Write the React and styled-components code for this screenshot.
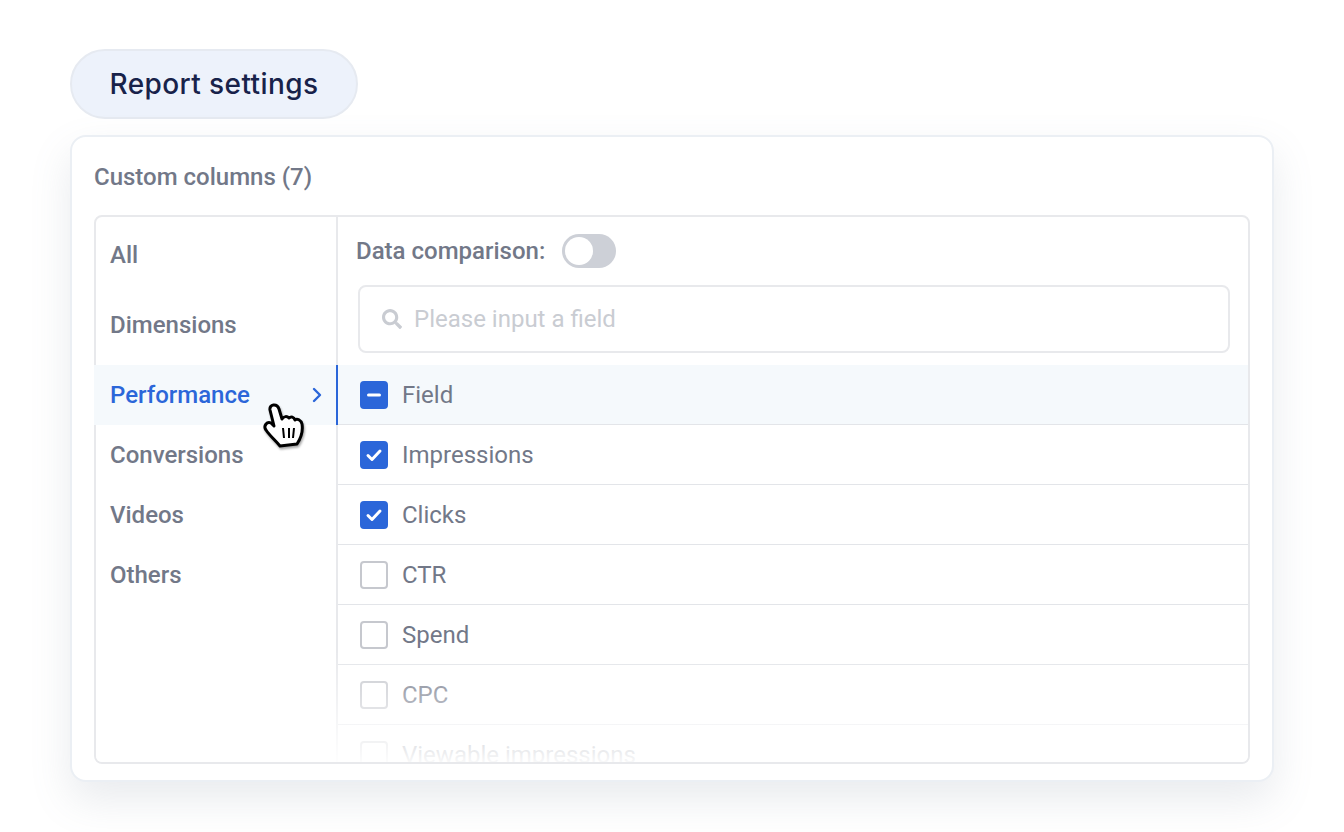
import React from 'react'
import styled, { createGlobalStyle } from 'styled-components'
import { FaSearch } from 'react-icons/fa'

const GlobalStyle = createGlobalStyle`
body {
    margin: 0;
    background: #ffffff;
    font-family: Roboto, "Liberation Sans", sans-serif;
}
`

const Page = styled.div`
width: 1344px;
height: 832px;
overflow: hidden;
box-sizing: border-box;
padding: 49px 70px 0 70px;
`

const Pill = styled.div`
width: 288px;
height: 70px;
box-sizing: border-box;
border: 2px solid #e6eaf1;
border-radius: 35px;
background: #edf2fb;
color: #18224a;
font-family: Inter, sans-serif;
font-size: 28px;
font-weight: 450;
letter-spacing: 0.4px;
display: flex;
align-items: center;
justify-content: center;
`

const Card = styled.div`
margin-top: 16px;
width: 1204px;
height: 647px;
box-sizing: border-box;
padding: 25px 22px 18px;
background: #ffffff;
border: 2px solid #ebeff4;
border-radius: 16px;
box-shadow: 0 18px 40px rgba(120, 130, 150, 0.16);
`

const CardTitle = styled.div`
height: 30px;
line-height: 30px;
color: #727888;
font-size: 24px;
font-weight: 500;
margin-bottom: 23px;
`

const Panel = styled.div`
position: relative;
height: 549px;
box-sizing: border-box;
border: 2px solid #e8e9ec;
border-radius: 8px;
display: grid;
grid-template-columns: 242px 1fr;
grid-template-rows: minmax(0, 1fr);
`

const Sidebar = styled.div`
padding-top: 3px;
border-right: 2px solid #e8e9ec;
`

const SideItem = styled.div`
height: ${p => p.$tall ? 70 : 60}px;
box-sizing: border-box;
padding: 0 13px 0 14px;
margin-top: ${p => p.$active ? 5 : 0}px;
margin-left: ${p => p.$active ? -2 : 0}px;
padding-left: ${p => p.$active ? 16 : 14}px;
margin-right: ${p => p.$active ? -2 : 0}px;
display: flex;
align-items: center;
justify-content: space-between;
font-size: 24px;
font-weight: 500;
color: ${p => p.$active ? '#2b66d9' : '#727888'};
background: ${p => p.$active ? '#f5f9fc' : 'transparent'};
border-right: ${p => p.$active ? '2px solid #2b66d9' : 'none'};
`

const Content = styled.div`
display: flex;
flex-direction: column;
overflow: hidden;
border-radius: 0 6px 6px 0;
`

const CompareRow = styled.div`
flex: none;
height: 68px;
box-sizing: border-box;
padding: 0 18px;
display: flex;
align-items: center;
gap: 17px;
color: #727888;
font-size: 24px;
font-weight: 500;
`

const Toggle = styled.div`
width: 54px;
height: 34px;
box-sizing: border-box;
padding: 3px;
border-radius: 17px;
background: #cdd0d7;
`

const Knob = styled.div`
width: 28px;
height: 28px;
border-radius: 50%;
background: #ffffff;
`

const SearchBox = styled.div`
flex: none;
margin: 0 18px 0 20px;
height: 68px;
box-sizing: border-box;
padding: 0 22px;
border: 2px solid #e8e9ec;
border-radius: 8px;
display: flex;
align-items: center;
gap: 12px;
color: #c9ccd2;
font-size: 24px;
`

const FieldList = styled.div`
flex: none;
margin-top: 12px;
`

const FieldRow = styled.div`
height: 60px;
box-sizing: border-box;
padding: 0 22px;
display: flex;
align-items: center;
gap: 14px;
color: #727888;
font-size: 24px;
background: ${p => p.$active ? '#f5f9fc' : 'transparent'};
border-bottom: 1px solid #e3e5e9;
`

const Check = styled.div`
width: 28px;
height: 28px;
box-sizing: border-box;
border-radius: 4px;
border: 2px solid ${p => p.$on ? '#2b66d9' : '#c6c8ce'};
background: ${p => p.$on ? '#2b66d9' : '#ffffff'};
display: flex;
align-items: center;
justify-content: center;
`

const Fade = styled.div`
position: absolute;
left: 0;
right: 0;
bottom: 0;
height: 112px;
border-radius: 0 0 6px 6px;
background: linear-gradient(rgba(255, 255, 255, 0), rgba(255, 255, 255, 0.95));
pointer-events: none;
`

const Hand = styled.svg`
position: absolute;
left: 255px;
top: 395px;
filter: drop-shadow(1px 2px 1px rgba(0, 0, 0, 0.35));
`

function CheckMark({ state }) {
    if (state === 'minus') {
        return (
            <svg width="16" height="16" viewBox="0 0 16 16">
                <path d="M2.5 8h11" stroke="#fff" strokeWidth="3" strokeLinecap="round" />
            </svg>
        )
    }
    if (state === 'on') {
        return (
            <svg width="18" height="18" viewBox="0 0 18 18" fill="none">
                <path d="M3 9.5l4 4 8-8.5" stroke="#fff" strokeWidth="3" strokeLinecap="round" strokeLinejoin="round" />
            </svg>
        )
    }
    return null
}

const fields = [
    { name: 'Field', state: 'minus', active: true },
    { name: 'Impressions', state: 'on' },
    { name: 'Clicks', state: 'on' },
    { name: 'CTR' },
    { name: 'Spend' },
    { name: 'CPC' },
    { name: 'Viewable impressions' },
]

function App() {
    return (
        <>
            <GlobalStyle />
            <Page>
                <Pill>Report settings</Pill>
                <Card>
                    <CardTitle>Custom columns (7)</CardTitle>
                    <Panel>
                        <Sidebar>
                            <SideItem $tall>All</SideItem>
                            <SideItem $tall>Dimensions</SideItem>
                            <SideItem $active>
                                Performance
                                <svg width="12" height="18" viewBox="0 0 12 18" fill="none">
                                    <path d="M3 3l6 6-6 6" stroke="#2b66d9" strokeWidth="2.4" strokeLinecap="round" strokeLinejoin="round" />
                                </svg>
                            </SideItem>
                            <SideItem>Conversions</SideItem>
                            <SideItem>Videos</SideItem>
                            <SideItem>Others</SideItem>
                        </Sidebar>
                        <Content>
                            <CompareRow>
                                Data comparison:
                                <Toggle><Knob /></Toggle>
                            </CompareRow>
                            <SearchBox>
                                <FaSearch size={20} color="#c9ccd2" />
                                Please input a field
                            </SearchBox>
                            <FieldList>
                                {fields.map(f => (
                                    <FieldRow key={f.name} $active={f.active}>
                                        <Check $on={!!f.state}><CheckMark state={f.state} /></Check>
                                        {f.name}
                                    </FieldRow>
                                ))}
                            </FieldList>
                        </Content>
                        <Fade />
                    </Panel>
                </Card>
            </Page>
            <Hand width="60" height="60" viewBox="0 0 60 60">
                <path d="M15 15C14 9 22 8 24 14L27 24C29 21 32 21 34 23C36 21 39 22 40 25C42 23 46 25 47 29C48 35 46 43 42 49L25 51C20 45 15 41 11 35C8 31 12 26 16 28L19 31Z" fill="#fff" stroke="#000" strokeWidth="3" strokeLinejoin="round" />
                <path d="M28 33l1 10M34 33l0 10M39 33l-1 10" stroke="#000" strokeWidth="2" />
            </Hand>
        </>
    )
}

export default App
